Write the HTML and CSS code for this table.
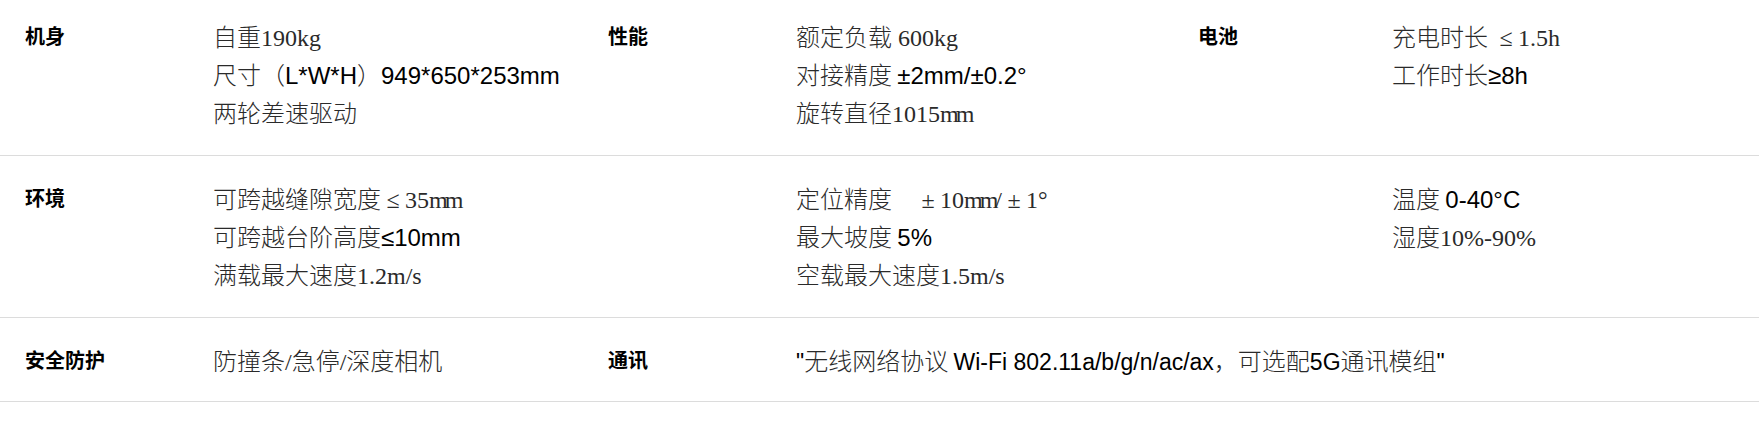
FILE: index.html
```html
<!DOCTYPE html>
<html lang="zh-CN">
<head>
<meta charset="utf-8">
<title>参数</title>
<link rel="stylesheet" href="styles.css">
</head>
<body>
<div class="specs">
  <div class="row">
    <div class="label">机身</div>
    <div class="value">
      <div class="line">自重<span class="sr">190kg</span></div>
      <div class="line">尺寸（<span class="ar">L*W*H</span>）<span class="ar">949*650*253mm</span></div>
      <div class="line">两轮差速驱动</div>
    </div>
    <div class="label">性能</div>
    <div class="value">
      <div class="line">额定负载<span class="sr"> 600kg</span></div>
      <div class="line">对接精度 <span class="ar">±2mm/±0.2°</span></div>
      <div class="line">旋转直径<span class="sr">1015<span class="nm">mm</span></span></div>
    </div>
    <div class="label">电池</div>
    <div class="value">
      <div class="line">充电时长<span class="sr"> </span><span class="fw">≤</span><span class="sr">1.5h</span></div>
      <div class="line">工作时长<span class="ar">≥8h</span></div>
    </div>
  </div>
  <div class="row">
    <div class="label">环境</div>
    <div class="value">
      <div class="line">可跨越缝隙宽度<span class="fw">≤</span><span class="sr">35<span class="nm">mm</span></span></div>
      <div class="line">可跨越台阶高度<span class="ar">≤10mm</span></div>
      <div class="line">满载最大速度<span class="sr">1.2m/s</span></div>
    </div>
    <div class="label"></div>
    <div class="value">
      <div class="line">定位精度　<span class="fw">±</span><span class="sr">10<span class="nm">mm</span>/</span><span class="fw">±</span><span class="sr">1°</span></div>
      <div class="line">最大坡度 <span class="ar">5%</span></div>
      <div class="line">空载最大速度<span class="sr">1.5m/s</span></div>
    </div>
    <div class="label"></div>
    <div class="value">
      <div class="line">温度 <span class="ar">0-40°C</span></div>
      <div class="line">湿度<span class="sr">10%-90%</span></div>
    </div>
  </div>
  <div class="row">
    <div class="label">安全防护</div>
    <div class="value">
      <div class="line">防撞条<span class="sr">/</span>急停<span class="sr">/</span>深度相机</div>
    </div>
    <div class="label">通讯</div>
    <div class="value wide">
      <div class="line"><span class="ar">"</span>无线网络协议 <span class="ar">Wi-Fi 802.11a/b/g/n/ac/ax</span>，可选配<span class="ar">5G</span>通讯模组<span class="ar">"</span></div>
    </div>
  </div>
</div>
</body>
</html>
```

FILE: styles.css
```css
html, body {
  margin: 0;
  padding: 0;
  background: #fff;
}

.specs {
  width: 1759px;
  font-family: "Noto Sans CJK SC", sans-serif;
  color: #222;
}

.row {
  display: grid;
  grid-template-columns: 188px 395px 188px 402px 194px 1fr;
  align-items: start;
  padding: 23px 0 24px 25px;
  border-bottom: 1px solid #dcdcdc;
}

.row:first-child {
  padding-top: 17px;
}

.row:last-child {
  padding-bottom: 22px;
}

.label {
  font-size: 20px;
  font-weight: 700;
  line-height: 38px;
  color: #000;
}

.value {
  font-size: 24px;
  font-weight: 300;
  line-height: 38px;
  white-space: nowrap;
  color: #2a2a2a;
}

.line {
  height: 38px;
  overflow: visible;
}

.value.wide {
  grid-column: 4 / 7;
}

.value.wide .ar {
  font-size: 23px;
}

.sr {
  font-family: "Liberation Serif", serif;
  font-weight: 400;
}

.nm {
  letter-spacing: -3px;
}

.ar {
  font-family: "Liberation Sans", sans-serif;
  font-weight: 400;
  color: #000;
}

.fw {
  display: inline-block;
  width: 24px;
  text-align: center;
  font-family: "Liberation Serif", serif;
  font-weight: 400;
}
```
